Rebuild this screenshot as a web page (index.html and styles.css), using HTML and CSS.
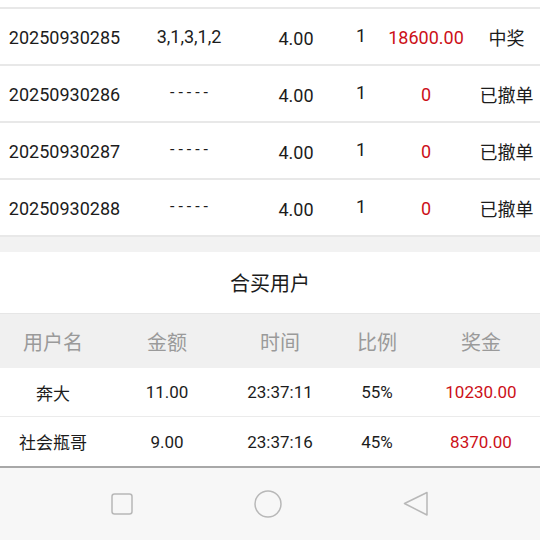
FILE: index.html
```html
<!DOCTYPE html>
<html>
<head>
<meta charset="utf-8"/>
<title>合买详情</title>
<link rel="stylesheet" href="styles.css">
</head>
<body>
  <div class="page">
    <div class="issues">
      <div class="issue">
        <span class="c-no">20250930285</span>
        <span class="c-num">3,1,3,1,2</span>
        <span class="c-amt">4.00</span>
        <span class="c-mul">1</span>
        <span class="c-win">18600.00</span>
        <span class="c-st">中奖</span>
      </div>
      <div class="issue">
        <span class="c-no">20250930286</span>
        <span class="c-num dash">- - - - -</span>
        <span class="c-amt">4.00</span>
        <span class="c-mul">1</span>
        <span class="c-win">0</span>
        <span class="c-st">已撤单</span>
      </div>
      <div class="issue">
        <span class="c-no">20250930287</span>
        <span class="c-num dash">- - - - -</span>
        <span class="c-amt">4.00</span>
        <span class="c-mul">1</span>
        <span class="c-win">0</span>
        <span class="c-st">已撤单</span>
      </div>
      <div class="issue">
        <span class="c-no">20250930288</span>
        <span class="c-num dash">- - - - -</span>
        <span class="c-amt">4.00</span>
        <span class="c-mul">1</span>
        <span class="c-win">0</span>
        <span class="c-st">已撤单</span>
      </div>
    </div>

    <div class="gap"></div>

    <div class="buyers">
      <div class="buyers-title">合买用户</div>
      <div class="brow bhead">
        <span>用户名</span>
        <span>金额</span>
        <span>时间</span>
        <span>比例</span>
        <span>奖金</span>
      </div>
      <div class="brow">
        <span>奔大</span>
        <span>11.00</span>
        <span>23:37:11</span>
        <span>55%</span>
        <span class="red">10230.00</span>
      </div>
      <div class="brow">
        <span>社会瓶哥</span>
        <span>9.00</span>
        <span>23:37:16</span>
        <span>45%</span>
        <span class="red">8370.00</span>
      </div>
    </div>
  </div>

  <div class="navbar">
    <svg class="nav-btn" width="24" height="26" viewBox="0 0 24 26">
      <rect x="2" y="3" width="20" height="20" rx="2.5" fill="none" stroke="#b8b8b8" stroke-width="1.5"/>
    </svg>
    <svg class="nav-btn" width="30" height="30" viewBox="0 0 30 30">
      <circle cx="15" cy="15" r="13" fill="none" stroke="#b8b8b8" stroke-width="1.5"/>
    </svg>
    <svg class="nav-btn" width="28" height="28" viewBox="0 0 28 28">
      <path d="M25 2.5 L2.5 13.5 L25 25 Z" fill="none" stroke="#b8b8b8" stroke-width="1.5" stroke-linejoin="round"/>
    </svg>
  </div>
</body>
</html>
```
FILE: styles.css
```css
*{
  padding:0;
  margin:0;
  box-sizing:border-box;
}
body{
  width:540px;
  height:540px;
  overflow:hidden;
  background:#fff;
  font-family:Roboto, "Noto Sans CJK SC", sans-serif;
  color:#1c1c1c;
}
.page{
  height:466px;
  overflow:hidden;
}
.issues{
  padding-top:7px;
}
.issue{
  display:grid;
  grid-template-columns:129px 120px 94px 36px 94px 67px;
  height:57px;
  border-top:2px solid #e8e8e8;
  align-items:center;
  text-align:center;
  font-size:18px;
}
.issue:last-child{
  height:59px;
  border-bottom:2px solid #e8e8e8;
}
.c-no{
  padding-top:1px;
}
.c-amt{
  padding-top:4px;
}
.c-mul{
  padding-bottom:2px;
}
.c-win{
  color:#cc1018;
  padding-top:2px;
}
.dash{
  font-size:16px;
  padding-bottom:2px;
}
.gap{
  height:15px;
  background:#f2f2f2;
}
.buyers-title{
  height:61px;
  line-height:61px;
  text-align:center;
  font-size:20px;
  padding-top:2px;
}
.brow{
  display:grid;
  grid-template-columns:106px 122px 104px 90px 118px;
  height:49px;
  align-items:center;
  text-align:center;
  font-size:17px;
  border-bottom:1px solid #ebebeb;
}
.brow:last-child{
  border-bottom:none;
}
.bhead{
  height:55px;
  background:#f0f0f0;
  border-top:1px solid #e6e6e6;
  border-bottom:none;
  color:#9a9a9a;
  font-size:20px;
}
.red{
  color:#cc1018;
}
.navbar{
  height:74px;
  background:#f7f7f7;
  border-top:2px solid #a8a8a8;
  display:flex;
  align-items:center;
  padding-left:110px;
  gap:119px;
}
.nav-btn{
  display:block;
}
```
